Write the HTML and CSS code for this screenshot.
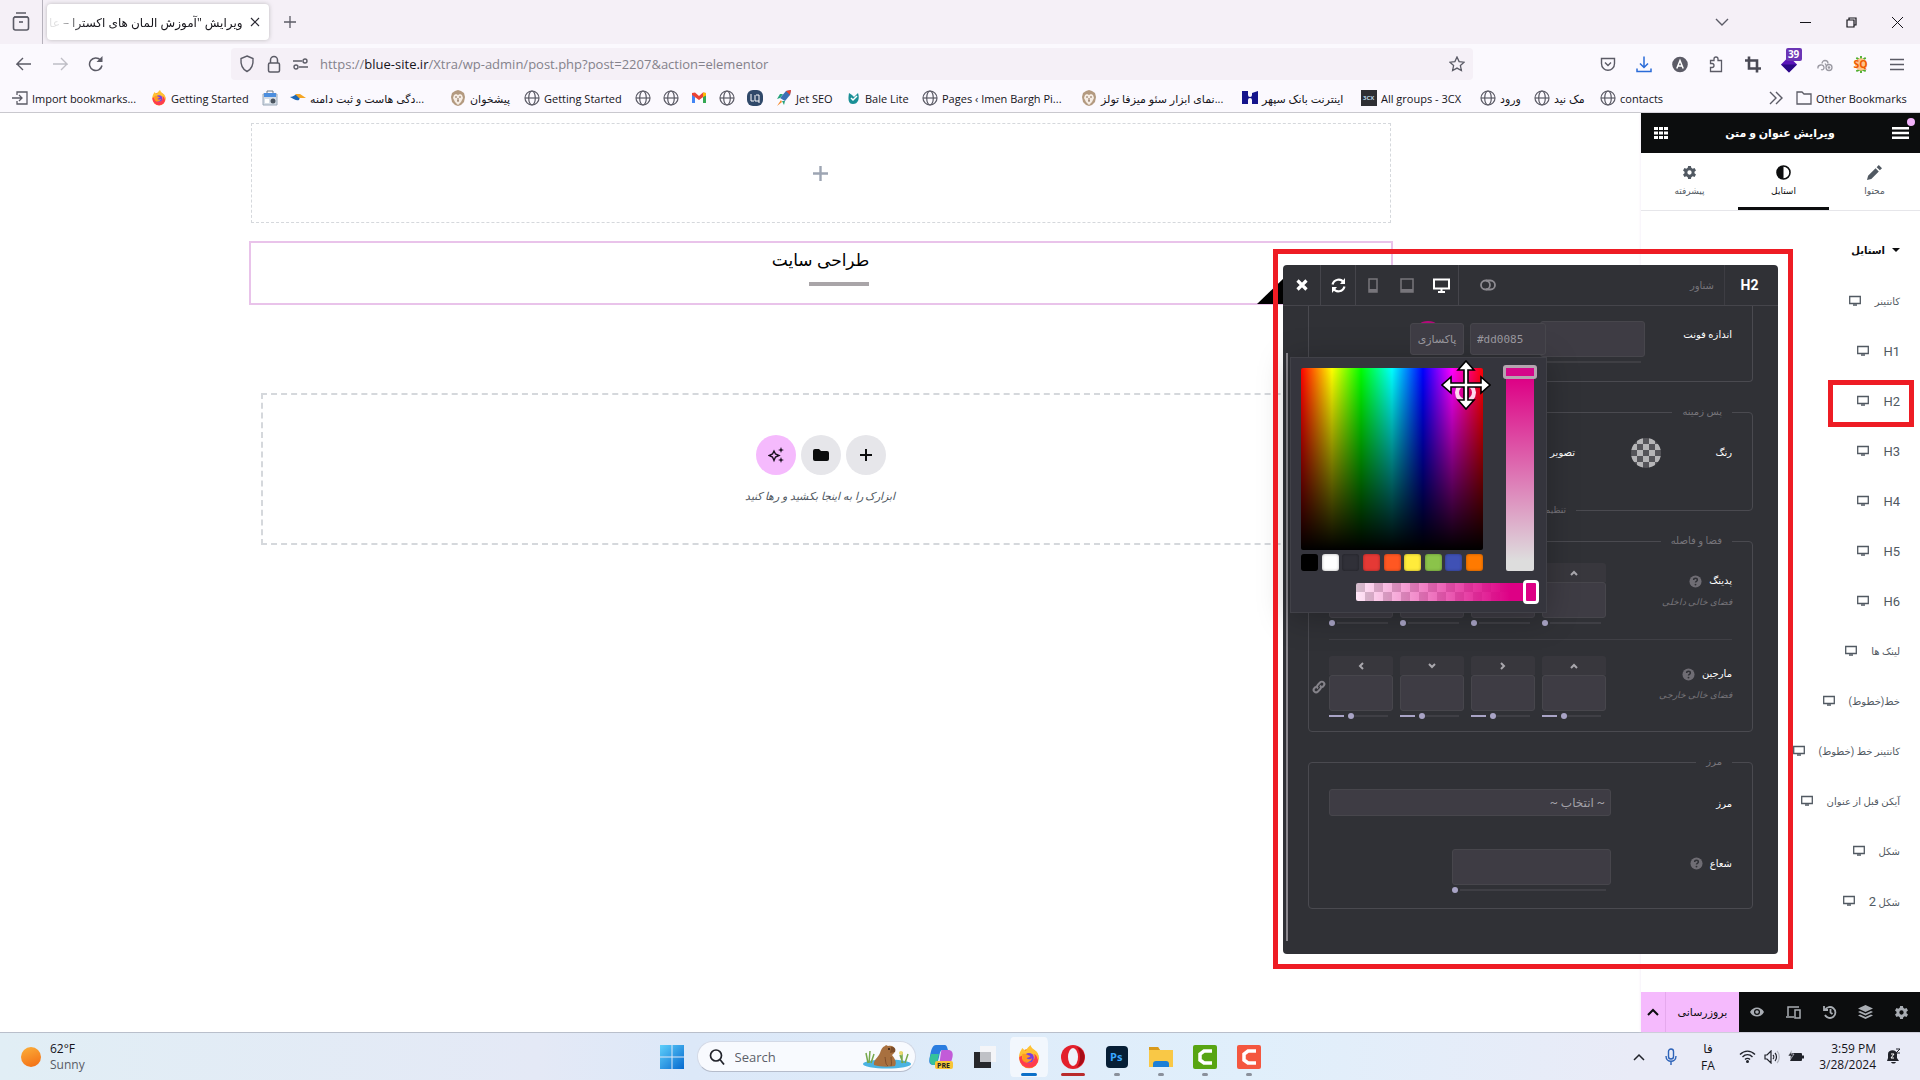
FILE: index.html
```html
<!DOCTYPE html>
<html lang="fa">
<head>
<meta charset="utf-8">
<title>ویرایش</title>
<link rel="stylesheet" href="styles.css">
</head>
<body>
<svg class="sprite" aria-hidden="true">
  <symbol id="globe" viewBox="0 0 16 16"><g fill="none" stroke="#5b5b66" stroke-width="1.2"><circle cx="8" cy="8" r="7"/><ellipse cx="8" cy="8" rx="3.3" ry="7"/><path d="M1 8h14"/></g></symbol>
  <symbol id="fox" viewBox="0 0 32 32"><circle cx="16" cy="18" r="13" fill="#ff8a1c"/><path d="M3 18C2 10 6 7 7 4c2 2 3 3 5 4 1-4 4-6 6-8 1 5 6 6 9 10 2 3 2 7 2 9z" fill="#ffc233"/><path d="M3 16c0 17 22 19 25 5-1-6-3-8-5-9 3 12-10 16-16 8 0-2-1-4 0-6z" fill="#ff3b4e"/><circle cx="16" cy="17" r="6.5" fill="#7a3ee0"/><path d="M7 12c3-1 5 0 7 1 1 1 3 1 4 2-2 2-4 1-5 3 2 2 6 1 7-1 0 7-12 8-13 0z" fill="#ff9a1f"/></symbol>
  <symbol id="lion" viewBox="0 0 16 16"><path d="M8 0l3 1 3 2 1 4-1 5-3 3-3 1-3-1-3-3-1-5 1-4 3-2z" fill="#b39a80"/><path d="M4 5l2-1 2 1 2-1 2 1 1 3-2 4-3 3-3-3-2-4z" fill="#f6ede4"/><path d="M5 7h2M9 7h2M7 11h2M8 8v3" stroke="#8a705a" fill="none"/></symbol>
  <symbol id="monitor" viewBox="0 0 12 12"><path d="M.7 1.500h10.600v7H.7z" fill="none" stroke="currentColor" stroke-width="1.300"/><path d="M4 10h4" stroke="currentColor" stroke-width="1.500"/></symbol>
  <symbol id="chev" viewBox="0 0 10 10"><path d="M2 7l3-3 3 3" fill="none" stroke="currentColor" stroke-width="2"/></symbol>
  <symbol id="help" viewBox="0 0 14 14"><circle cx="7" cy="7" r="6.500" fill="#6f6d74"/><path d="M5 5.500c0-2.500 4-2.500 4 0 0 1.300-2 1.200-2 2.500" fill="none" stroke="#303136" stroke-width="1.600"/><circle cx="7" cy="10.300" r="1" fill="#303136"/></symbol>
  <symbol id="gear" viewBox="0 0 16 16"><path fill="currentColor" fill-rule="evenodd" d="M6.500 1h3l.4 2 1.500.9 2-.7 1.500 2.600-1.600 1.400v1.600l1.600 1.400-1.500 2.600-2-.7-1.500.9-.4 2h-3l-.4-2-1.500-.9-2 .7-1.500-2.600 1.600-1.400V7.200L1.100 5.800l1.500-2.600 2 .7 1.500-.9zM8 5.700a2.300 2.300 0 1 0 0 4.600 2.300 2.300 0 0 0 0-4.600z"/></symbol>
</svg>

<header class="tabstrip">
  <button class="ico view" aria-label="View"><svg width="18" height="20" viewBox="0 0 18 20" fill="none" stroke="#5b5b66" stroke-width="1.600"><path d="M4 1h10M2 5h14"/><rect x="1.500" y="5" width="15" height="13" rx="2"/><path d="M7 10h4"/></svg></button>
  <div class="tab"><span class="tab-title" dir="rtl">ویرایش "آموزش المان های اکسترا – عا</span><button class="ico" aria-label="Close tab"><svg width="10" height="10" viewBox="0 0 10 10" stroke="#2b2a33" stroke-width="1.200"><path d="M1 1l8 8M9 1l-8 8"/></svg></button></div>
  <button class="ico newtab" aria-label="New tab"><svg width="12" height="12" viewBox="0 0 12 12" stroke="#5b5b66" stroke-width="1.300"><path d="M6 0v12M0 6h12"/></svg></button>
  <div class="winctl">
    <button class="ico" aria-label="List tabs"><svg width="14" height="14" viewBox="0 0 14 14" fill="none" stroke="#5b5b66" stroke-width="1.400"><path d="M1 4l6 6 6-6"/></svg></button>
    <button class="ico" aria-label="Minimize"><svg width="11" height="11" viewBox="0 0 11 11" stroke="#15141a"><path d="M0 5.500h11"/></svg></button>
    <button class="ico" aria-label="Restore"><svg width="11" height="11" viewBox="0 0 11 11" fill="none" stroke="#15141a" stroke-width="1.200"><path d="M1 3h7v7H1zM3 3V1h7v7H8"/></svg></button>
    <button class="ico" aria-label="Close"><svg width="11" height="11" viewBox="0 0 11 11" stroke="#15141a"><path d="M0 0l11 11M11 0L0 11"/></svg></button>
  </div>
</header>

<nav class="navbar">
  <div class="navbtns">
    <button class="ico" aria-label="Back"><svg width="16" height="14" viewBox="0 0 16 14" fill="none" stroke="#5b5b66" stroke-width="1.400"><path d="M15 7H1l6-6M1 7l6 6"/></svg></button>
    <button class="ico" aria-label="Forward"><svg width="16" height="14" viewBox="0 0 16 14" fill="none" stroke="#bfbec6" stroke-width="1.400"><path d="M1 7h14L9 1M15 7l-6 6"/></svg></button>
    <button class="ico" aria-label="Reload"><svg width="16" height="16" viewBox="0 0 16 16" fill="none" stroke="#5b5b66" stroke-width="1.500"><path d="M14 9.500A6.300 6.300 0 1 1 12.500 4"/><path d="M14.500 0v6h-6z" fill="#5b5b66" stroke="none"/></svg></button>
  </div>
  <div class="urlbar">
    <svg width="16" height="18" viewBox="0 0 16 18" fill="none" stroke="#5b5b66" stroke-width="1.400"><path d="M8 1l6 2.500c.5 6-1 10.500-6 13-5-2.500-6.500-7-6-13z"/></svg>
    <svg width="14" height="18" viewBox="0 0 14 18" fill="none" stroke="#5b5b66" stroke-width="1.500"><rect x="1.500" y="8" width="11" height="9" rx="1.500"/><path d="M3.500 8V5a3.500 3.500 0 0 1 7 0v3"/></svg>
    <svg width="15" height="12" viewBox="0 0 15 12" fill="none" stroke="#5b5b66" stroke-width="1.400"><path d="M0 3h9M6 9h9"/><circle cx="12" cy="3" r="2"/><circle cx="3" cy="9" r="2"/></svg>
    <div class="url" role="textbox" aria-label="Address">https://<b>blue-site.ir</b>/Xtra/wp-admin/post.php?post=2207&amp;action=elementor</div>
    <svg width="16" height="16" viewBox="0 0 16 16" fill="none" stroke="#5b5b66" stroke-width="1.300"><path d="M8 1l2.100 4.600 5 .6-3.700 3.400 1 5L8 12.100 3.600 14.600l1-5L.9 6.200l5-.6z"/></svg>
  </div>
  <div class="exts">
    <svg viewBox="0 0 16 16" fill="none" stroke="#5b5b66" stroke-width="1.400"><path d="M1.500 2h13v5c0 9-13 9-13 0z"/><path d="M5 6l3 3 3-3"/></svg>
    <svg viewBox="0 0 16 16" fill="none" stroke="#2a6bd8" stroke-width="1.500"><path d="M8 0v11M4 7l4 4 4-4M1 12v3h14v-3"/></svg>
    <svg viewBox="0 0 16 16"><circle cx="8" cy="8" r="7.800" fill="#5b5b66"/><path d="M4.800 12L8 4l3.200 8M6 9.500h4" fill="none" stroke="#fff" stroke-width="1.500"/></svg>
    <svg viewBox="0 0 16 16" fill="none" stroke="#5b5b66" stroke-width="1.300"><path d="M2.500 15v-4h1.500a2 2 0 0 0 0-4H2.500V4H6V2.500a2 2 0 0 1 4 0V4h3.500v11z"/></svg>
    <svg viewBox="0 0 16 16" fill="none" stroke="#4a4a55" stroke-width="2.600"><path d="M4 0v12h12M0 4h12v12"/></svg>
    <span class="ext39"><svg viewBox="0 0 16 16"><path d="M8 0l8 8-8 8-8-8z" fill="#5a16b8"/><path d="M0 8h16l-8 8z" fill="#2b0a86"/></svg><em>39</em></span>
    <svg viewBox="0 0 16 16" fill="none" stroke="#9a99a2" stroke-width="1.300"><path d="M5 7a3 3 0 1 1 6 0M1 12a3 3 0 0 1 6-1 2 2 0 0 1-3 2M8 7l2 3"/><circle cx="12" cy="11" r="3"/><circle cx="12" cy="11" r=".7"/></svg>
    <svg viewBox="0 0 16 18"><path d="M3 2l5 3 5-3M3 16l5-2 5 2M8 0v4M8 18v-3" stroke="#4faf2f" stroke-width="2" fill="none"/><circle cx="8" cy="9" r="6.500" fill="#ffc38a"/><text x="0" y="13" font-size="11" font-weight="700" fill="#f05a00">SQ</text></svg>
    <svg viewBox="0 0 16 16" stroke="#5b5b66" stroke-width="1.400"><path d="M1 3h14M1 8h14M1 13h14"/></svg>
  </div>
</nav>

<nav class="bookmarks">
  <a href="#"><svg viewBox="0 0 16 16" fill="none" stroke="#5b5b66" stroke-width="1.300"><path d="M5 5V2h10v12H5v-3M0 8h10M7 5l3 3-3 3"/></svg>Import bookmarks...</a>
  <a href="#"><svg><use href="#fox"/></svg>Getting Started</a>
  <a href="#" aria-label="Store"><svg viewBox="0 0 16 16"><path d="M1 4h14v11H1z" fill="#d5dde6" stroke="#9aa8b8"/><path d="M2 3h12v4H2z" fill="#4c8ede"/><path d="M5 3V1h6v2" stroke="#6c7a88" fill="none"/><path d="M3 9h4v4H3z" fill="#fff"/><circle cx="11" cy="11" r="2.500" fill="#4b5560"/></svg></a>
  <a href="#"><svg viewBox="0 0 16 16"><path d="M0 7c4 0 5-3 8-3 2 2 2 4 1 6-3 1-5-1-9-3z" fill="#1c67b5"/><path d="M5 4h5l6 4H9z" fill="#f5a623"/></svg><bdi dir="rtl">...دگی هاست و ثبت دامنه</bdi></a>
  <a href="#"><svg><use href="#lion"/></svg>پیشخوان</a>
  <a href="#"><svg><use href="#globe"/></svg>Getting Started</a>
  <a href="#" aria-label="Site"><svg><use href="#globe"/></svg></a>
  <a href="#" aria-label="Site"><svg><use href="#globe"/></svg></a>
  <a href="#" aria-label="Mail"><svg viewBox="0 0 16 16"><path d="M1 4v9h3V7" fill="#4285f4"/><path d="M12 13h3V4l-3 3z" fill="#34a853"/><path d="M1 3l3-.5 4 3.500 4-3.500L15 3v2L8 10 1 5z" fill="#ea4335"/><path d="M12 2.500L15 3v2.500L12 7z" fill="#fbbc04"/></svg></a>
  <a href="#" aria-label="Site"><svg><use href="#globe"/></svg></a>
  <a href="#" aria-label="Site"><svg viewBox="0 0 16 16"><rect width="16" height="16" rx="6" fill="#30496a"/><path d="M4 4v7h3M8 5v6h4V5H9M12 11v2" stroke="#fff" fill="none"/></svg></a>
  <a href="#"><svg viewBox="0 0 16 16"><path d="M4 8l6-7 5-1-1 5-5 6z" fill="#3c6fb4"/><path d="M10 1l5-1-1 5z" fill="#e8452f"/><path d="M4 8L1 9l3-5h3zM9 11l-1 4-2-4z" fill="#25a37b"/><path d="M5 10l-4 6 5-4z" fill="#f58a2c"/></svg>Jet SEO</a>
  <a href="#"><svg viewBox="0 0 16 16"><path d="M4 3l3 2 2 2 4-4c2 6 0 11-5 11S3 9 4 3z" fill="#1a8f96"/><path d="M6 8l2 2 4-4" stroke="#fff" fill="none" stroke-width="1.500"/></svg>Bale Lite</a>
  <a href="#"><svg><use href="#globe"/></svg>Pages ‹ Imen Bargh Pi...</a>
  <a href="#"><svg><use href="#lion"/></svg><bdi dir="rtl">...نمای ابزار سئو میزفا تولز</bdi></a>
  <a href="#"><svg viewBox="0 0 16 16"><path d="M0 1h6v4a2 2 0 0 0 4 0V3l6-2v13h-6v-4a2 2 0 0 0-4 0v4H0z" fill="#14148c"/></svg>اینترنت بانک سپهر</a>
  <a href="#"><svg viewBox="0 0 16 16"><path d="M0 0h16v16H0z" fill="#2e2f33"/><text x="2" y="10" font-size="6" font-weight="700" fill="#b9d6e6">3CX</text></svg>All groups - 3CX</a>
  <a href="#"><svg><use href="#globe"/></svg>ورود</a>
  <a href="#"><svg><use href="#globe"/></svg>مک نید</a>
  <a href="#"><svg><use href="#globe"/></svg>contacts</a>
  <a href="#" class="more" aria-label="More"><svg viewBox="0 0 16 16" fill="none" stroke="#5b5b66" stroke-width="1.400"><path d="M2 2l6 6-6 6M8 2l6 6-6 6"/></svg></a>
  <a href="#"><svg viewBox="0 0 16 16" fill="none" stroke="#5b5b66" stroke-width="1.300"><path d="M1 14V2h5l2 2h7v10z"/></svg>Other Bookmarks</a>
</nav>

<main class="work">
  <section class="canvas">
    <div class="empty"><svg width="15" height="15" viewBox="0 0 15 15" stroke="#9da5b3" stroke-width="2.400"><path d="M7.500 0v15M0 7.500h15"/></svg></div>
    <div class="selected"><div class="heading" dir="rtl"><h2>طراحی سایت</h2><i></i></div></div>
    <div class="dropzone" dir="rtl">
      <div class="dz-btns">
        <button aria-label="Add"><svg width="12" height="12" viewBox="0 0 12 12" stroke="#0c0d0e" stroke-width="2"><path d="M6 0v12M0 6h12"/></svg></button>
        <button aria-label="Library"><svg width="16" height="14" viewBox="0 0 16 14"><path d="M2 1h4l2 2h6a2 2 0 0 1 2 2v6a2 2 0 0 1-2 2H2a2 2 0 0 1-2-2V3a2 2 0 0 1 2-2z" fill="#0c0d0e"/></svg></button>
        <button class="ai" aria-label="AI"><svg width="16" height="16" viewBox="0 0 16 16"><path d="M6 4l1.500 3L11 8.500 7.500 10 6 13.500 4.500 10 1 8.500 4.500 7z" fill="none" stroke="#1b1020" stroke-width="1.400"/><path d="M13 0l.8 2.200L16 3l-2.200.8L13 6l-.8-2.200L10 3l2.200-.8zM13 10l.8 2.200 2.200.8-2.200.8L13 16l-.8-2.200L10 13l2.200-.8z" fill="#1b1020"/></svg></button>
      </div>
      <p>ابزارک را به اینجا بکشید و رها کنید</p>
    </div>
    <span class="corner"></span>
  </section>

  <aside class="panel" dir="rtl">
    <div class="p-head">
      <button class="ico" aria-label="Menu"><svg width="17" height="12" viewBox="0 0 17 12" stroke="#fff" stroke-width="2.400"><path d="M0 1.200h17M0 6h17M0 10.800h17"/></svg></button>
      <h1>ویرایش عنوان و متن</h1>
      <button class="ico" aria-label="Widgets"><svg width="14" height="12" viewBox="0 0 14 12" fill="#fff"><path d="M0 0h4v3H0zM5 0h4v3H5zM10 0h4v3h-4zM0 4.500h4v3H0zM5 4.500h4v3H5zM10 4.500h4v3h-4zM0 9h4v3H0zM5 9h4v3H5zM10 9h4v3h-4z"/></svg></button>
      <span class="dot"></span>
    </div>
    <div class="p-tabs">
      <button><svg width="14" height="14" viewBox="0 0 14 14" fill="#515962"><path d="M0 14l1-4 7-7 3 3-7 7zM9 2l2-2 3 3-2 2z"/></svg>محتوا</button>
      <button class="on"><svg width="15" height="15" viewBox="0 0 15 15"><circle cx="7.500" cy="7.500" r="6.500" fill="#fff" stroke="#0c0d0e" stroke-width="1.600"/><path d="M7.500 1a6.500 6.500 0 0 0 0 13z" fill="#0c0d0e"/></svg>استایل</button>
      <button><svg width="15" height="15"><use href="#gear"/></svg>پیشرفته</button>
    </div>
    <h3 class="p-title"><i></i>استایل</h3>
    <ul class="p-rows">
      <li><span>کانتینر</span><svg><use href="#monitor"/></svg></li>
      <li class="tag"><span>H1</span><svg><use href="#monitor"/></svg></li>
      <li class="tag marked"><span>H2</span><svg><use href="#monitor"/></svg></li>
      <li class="tag"><span>H3</span><svg><use href="#monitor"/></svg></li>
      <li class="tag"><span>H4</span><svg><use href="#monitor"/></svg></li>
      <li class="tag"><span>H5</span><svg><use href="#monitor"/></svg></li>
      <li class="tag"><span>H6</span><svg><use href="#monitor"/></svg></li>
      <li><span>لینک ها</span><svg><use href="#monitor"/></svg></li>
      <li><span>خط(خطوط)</span><svg><use href="#monitor"/></svg></li>
      <li><span>کانتینر خط (خطوط)</span><svg><use href="#monitor"/></svg></li>
      <li><span>آیکن قبل از عنوان</span><svg><use href="#monitor"/></svg></li>
      <li><span>شکل</span><svg><use href="#monitor"/></svg></li>
      <li><span>شکل <b>2</b></span><svg><use href="#monitor"/></svg></li>
    </ul>
    <footer class="p-foot">
      <button aria-label="Settings"><svg width="15" height="15"><use href="#gear"/></svg></button>
      <button aria-label="Structure"><svg width="15" height="14" viewBox="0 0 15 14" fill="#a9adb3"><path d="M7.500 0L15 3.500 7.500 7 0 3.500z"/><path d="M0 7l2-1 5.500 2.500L13 6l2 1-7.500 3.500z"/><path d="M0 10.500l2-1L7.500 12 13 9.500l2 1L7.500 14z"/></svg></button>
      <button aria-label="History"><svg width="14" height="14" viewBox="0 0 14 14" fill="none" stroke="#a9adb3" stroke-width="1.800"><path d="M2 5a5.500 5.500 0 1 1 0 5M1 1v4h4M7.500 4v3.500l2 1.500"/></svg></button>
      <button aria-label="Responsive"><svg width="15" height="13" viewBox="0 0 15 13" fill="none" stroke="#a9adb3" stroke-width="1.500"><path d="M2 10V1h11M0 11h8M9 4h5v8H9z"/></svg></button>
      <button aria-label="Preview"><svg width="14" height="10" viewBox="0 0 14 10"><path d="M0 5c3-6 11-6 14 0-3 6-11 6-14 0z" fill="#a9adb3"/><circle cx="7" cy="5" r="3" fill="#0c0d0e"/><circle cx="7" cy="5" r="1.800" fill="#a9adb3"/></svg></button>
      <button class="publish">بروزرسانی</button>
      <button class="pub-more" aria-label="Options"><svg width="12" height="8" viewBox="0 0 12 8" fill="none" stroke="#0c0d0e" stroke-width="2"><path d="M1 7l5-5 5 5"/></svg></button>
    </footer>
  </aside>

  <section class="popup" dir="rtl">
    <header class="pop-head">
      <strong>H2</strong>
      <span class="hover">شناور</span>
      <button class="toggle" aria-label="Toggle"><svg width="16" height="12" viewBox="0 0 16 12" fill="none" stroke="#8d8b91" stroke-width="1.800"><circle cx="5.500" cy="6" r="4.500"/><path d="M6 1.500h4.500a4.500 4.500 0 0 1 0 9H6"/></svg></button>
      <div class="devices">
        <button aria-label="Desktop"><svg width="17" height="15" viewBox="0 0 17 15" fill="none" stroke="#fff" stroke-width="2"><path d="M1 1.500h15v9H1zM5 14h7M8.500 10v4"/></svg></button>
        <button aria-label="Tablet"><svg width="14" height="15" viewBox="0 0 14 15"><path d="M1 1h12v13H1z" fill="none" stroke="#77757b" stroke-width="1.500"/><path d="M1 11h12v3H1z" fill="#77757b"/></svg></button>
        <button aria-label="Phone"><svg width="10" height="15" viewBox="0 0 10 15"><path d="M1 1h8v13H1z" fill="none" stroke="#77757b" stroke-width="1.500"/><path d="M1 11h8v3H1z" fill="#77757b"/></svg></button>
      </div>
      <button class="act" aria-label="Reset"><svg width="15" height="15" viewBox="0 0 15 15" fill="none" stroke="#fff" stroke-width="2.200"><path d="M1.500 6.500C3 1 10 0 12.500 4.500M13.500 8.500C12 14 5 15 2.500 10.500"/><path d="M14 0v6H9zM1 15V9h5z" fill="#fff" stroke="none"/></svg></button>
      <button class="act" aria-label="Close"><svg width="12" height="12" viewBox="0 0 12 12" stroke="#fff" stroke-width="3.200"><path d="M1.500 1.500l9 9M10.500 1.500l-9 9"/></svg></button>
    </header>
    <div class="pop-body">
      <fieldset class="cut">
        <label for="fs">اندازه فونت</label>
        <span class="fs-box"><input id="fs" class="box" type="text"><i></i></span>
        <span class="pink"></span>
      </fieldset>
      <fieldset class="bg">
        <legend>پس زمینه</legend>
        <span class="lab">رنگ</span><button class="checker" aria-label="Color"></button><span class="lab img">تصویر</span>
        <span class="more-set">تنظیمات</span>
      </fieldset>
      <fieldset class="space">
        <legend>فضا و فاصله</legend>
        <div class="srow">
          <div class="slab"><span>پدینگ <svg width="13" height="13"><use href="#help"/></svg></span><em>فضای خالی داخلی</em></div>
          <div class="quad zero">
            <div><b><svg><use href="#chev"/></svg></b><input class="box" type="text" aria-label="Top"><input type="range" value="0" aria-label="Top"></div>
            <div><b><svg class="r"><use href="#chev"/></svg></b><input class="box" type="text" aria-label="Right"><input type="range" value="0" aria-label="Right"></div>
            <div><b><svg class="d"><use href="#chev"/></svg></b><input class="box" type="text" aria-label="Bottom"><input type="range" value="0" aria-label="Bottom"></div>
            <div><b><svg class="l"><use href="#chev"/></svg></b><input class="box" type="text" aria-label="Left"><input type="range" value="0" aria-label="Left"></div>
          </div>
        </div>
        <div class="srow">
          <div class="slab"><span>مارجین <svg width="13" height="13"><use href="#help"/></svg></span><em>فضای خالی خارجی</em></div>
          <div class="quad">
            <div><b><svg><use href="#chev"/></svg></b><input class="box" type="text" aria-label="Top"><input type="range" value="36" aria-label="Top"></div>
            <div><b><svg class="r"><use href="#chev"/></svg></b><input class="box" type="text" aria-label="Right"><input type="range" value="36" aria-label="Right"></div>
            <div><b><svg class="d"><use href="#chev"/></svg></b><input class="box" type="text" aria-label="Bottom"><input type="range" value="36" aria-label="Bottom"></div>
            <div><b><svg class="l"><use href="#chev"/></svg></b><input class="box" type="text" aria-label="Left"><input type="range" value="36" aria-label="Left"></div>
          </div>
          <svg class="link" width="14" height="14" viewBox="0 0 14 14" fill="none" stroke="#85838a" stroke-width="2"><path d="M6 8.500C4 6.500 5 5.500 8 2.500c2.500-2.500 6 1 3.500 3.500L10 7.500M8 5.500c2 2 1 3-2 6C3.500 14 0 10.500 2.500 8L4 6.500"/></svg>
        </div>
      </fieldset>
      <fieldset class="border">
        <legend>مرز</legend>
        <div class="brow"><label for="bsel">مرز</label><select id="bsel" class="box"><option>~ انتخاب ~</option></select></div>
        <div class="brow rad"><label for="rad">شعاع <svg width="13" height="13"><use href="#help"/></svg></label><span class="rbox zero"><input id="rad" class="box" type="text"><input type="range" value="0" aria-label="Radius"></span></div>
      </fieldset>
      <span class="scroll"></span>
    </div>

    <div class="picker-wrap" dir="ltr">
      <div class="hexrow"><button class="box clear">پاکسازی</button><input class="box hex" type="text" value="#dd0085" aria-label="Color value"></div>
      <div class="picker">
        <div class="pk-top">
          <div class="pk-left">
            <div class="sv"><span class="ring"></span><svg class="cursor" width="50" height="50" viewBox="0 0 50 50"><path d="M25 1l8 9h-6v13h13v-6l9 8-9 8v-6H27v13h6l-8 9-8-9h6V27H10v6l-9-8 9-8v6h13V10h-6z" fill="#fff" stroke="#000" stroke-width="1.600"/></svg></div>
            <div class="sw"><i class="c1"></i><i class="c2"></i><i class="c3"></i><i class="c4"></i><i class="c5"></i><i class="c6"></i><i class="c7"></i><i class="c8"></i><i class="c9"></i></div>
          </div>
          <div class="vbar"><i></i></div>
        </div>
        <div class="abar"><i></i></div>
      </div>
    </div>
  </section>
  <span class="frame"></span>
</main>

<footer class="taskbar">
  <div class="weather"><i></i><div><span>62°F</span><small>Sunny</small></div></div>
  <div class="apps">
    <svg width="24" height="24" viewBox="0 0 24 24"><defs><linearGradient id="w" x2="1" y2="1"><stop stop-color="#5fd0fb"/><stop offset="1" stop-color="#0669cf"/></linearGradient></defs><path d="M0 0h11.500v11.500H0zM12.500 0H24v11.500H12.500zM0 12.500h11.500V24H0zM12.500 12.500H24V24H12.500z" fill="url(#w)"/></svg>
    <label class="search"><svg width="16" height="16" viewBox="0 0 16 16" fill="none" stroke="#20222a" stroke-width="1.700"><circle cx="7" cy="6.500" r="5.500"/><path d="M11 10.500l4 5"/></svg><input type="text" placeholder="Search" aria-label="Search">
      <svg width="48" height="24" viewBox="0 0 48 24"><ellipse cx="24" cy="19" rx="24" ry="4.500" fill="#4bb3e2"/><path d="M11 20c-1-5 4-7 6-12 1-3 2-6 5-7l1-1 2 1c4-1 7 1 7 4s-2 4-3 5c3 4 5 7 3 11-6 1-15 1-21-1z" fill="#a8703f"/><path d="M28 2c4 0 5 2 4 5l-5 1z" fill="#7c4d2a"/><path d="M22 12c1 4 0 7 3 9M28 12c0 4 1 6 0 9" stroke="#7c4d2a" fill="none"/><circle cx="26" cy="4" r="1" fill="#2c1a10"/><path d="M5 18L3 8M6 18l1-12M8 18l3-9M39 18V7M42 18l3-9M40 18l-3-8" stroke="#76a84b" stroke-width="1.500" fill="none"/><circle cx="38" cy="8" r="2" fill="#e8d76b"/></svg></label>
    <div class="app"><svg width="24" height="26" viewBox="0 0 24 26"><path d="M7 1h8c3 0 3 2 4 5h-5c-3 0-3 3-4 7s-2 8-5 8c-6 0-5-5-4-9C2 7 3 1 7 1z" fill="#2a7de0"/><path d="M13 6h6c6 0 5 6 4 9s-2 8-7 8H8c4-2 3-17 5-17z" fill="#c25bd8"/><path d="M2 10h8l-2 9-3 2c-5 0-5-6-3-11z" fill="#35c39a"/><rect x="6" y="17" width="18" height="8" rx="2" fill="#f8c537"/><text x="8" y="24" font-size="7" font-weight="700" fill="#222">PRE</text></svg></div>
    <div class="app"><svg width="24" height="24" viewBox="0 0 24 24"><path d="M1 7h17v16H1z" fill="#26272b"/><path d="M7 1h16v16H7z" fill="#f4f5f8"/><path d="M7 7h11v10H7z" fill="#bfc1c6"/></svg></div>
    <div class="app tile blue"><svg width="24" height="24"><use href="#fox"/></svg></div>
    <div class="app red"><svg width="24" height="24" viewBox="0 0 24 24"><ellipse cx="12" cy="12" rx="12" ry="12" fill="#e3202c"/><ellipse cx="12" cy="12" rx="5" ry="9" fill="#eef3fb"/><path d="M16 2c10 3 10 17 0 20 4-5 4-15 0-20z" fill="#a60c17"/></svg></div>
    <div class="app run"><svg width="22" height="22" viewBox="0 0 22 22"><rect width="22" height="22" rx="4" fill="#061e35"/><text x="4" y="15" font-size="11" font-weight="700" fill="#39a7ff">Ps</text></svg></div>
    <div class="app run"><svg width="24" height="22" viewBox="0 0 24 22"><path d="M0 1h9l2 3h13v17H0z" fill="#f9c846"/><path d="M0 1h9l2 3H0z" fill="#d99a1c"/><path d="M4 21v-3c0-2 1-3 3-3h10c2 0 3 1 3 3v3z" fill="#1c7fd6"/></svg></div>
    <div class="app run"><svg width="24" height="24" viewBox="0 0 24 24"><rect width="24" height="24" rx="2" fill="#58a512"/><path d="M19 6h-8L7 9v6l4 3h8" fill="none" stroke="#fff" stroke-width="3.500"/></svg></div>
    <div class="app run"><svg width="24" height="24" viewBox="0 0 24 24"><rect width="24" height="24" rx="2" fill="#f4573f"/><path d="M19 6h-8L7 9v6l4 3h8" fill="none" stroke="#fff" stroke-width="3.500"/></svg></div>
  </div>
  <div class="tray">
    <svg width="12" height="8" viewBox="0 0 12 8" fill="none" stroke="#20222a" stroke-width="1.500"><path d="M1 7l5-5 5 5"/></svg>
    <svg width="12" height="18" viewBox="0 0 12 18" fill="none" stroke="#2c62b8" stroke-width="1.400"><rect x="3.500" y="1" width="5" height="10" rx="2.500"/><path d="M1 8c0 7 10 7 10 0M6 13v4"/></svg>
    <div class="lang"><span>فا</span><span>FA</span></div>
    <svg width="17" height="13" viewBox="0 0 17 13" fill="none" stroke="#20222a" stroke-width="1.400"><path d="M1 4.500c4.500-4.500 10.500-4.500 15 0M3.500 7c3-3 7-3 10 0M6 9.500c1.500-1.500 3.500-1.500 5 0"/><circle cx="8.500" cy="11.500" r=".8"/></svg>
    <svg width="16" height="14" viewBox="0 0 16 14" fill="none" stroke="#20222a" stroke-width="1.200"><path d="M1 5v4h2l4 4V1L3 5zM9 5c1 1 1 3 0 4M11 3c2 2 2 6 0 8"/><path d="M13 1c3 3 3 9 0 12" stroke="#b5b8c2"/></svg>
    <svg width="16" height="13" viewBox="0 0 16 13"><path d="M3 3h10a1 1 0 0 1 1 1v1.500h2v3h-2V10a1 1 0 0 1-1 1H3a1 1 0 0 1-1-1z" fill="#20222a"/><path d="M4 0L0 6h3l-1 4 4-6H3z" fill="#20222a" stroke="#e9ebf7" stroke-width=".6"/></svg>
    <div class="clock"><span>3:59 PM</span><span>3/28/2024</span></div>
    <svg width="15" height="17" viewBox="0 0 15 17"><path d="M1 13l1-3V6c0-5 9-5 9 0v4l2 3zM5 14h5c-1 2-4 2-5 0z" fill="#20222a"/><path d="M10 1h4l-4 4h4" fill="none" stroke="#20222a"/><path d="M5 6h3L5 10h3" fill="none" stroke="#fff"/></svg>
  </div>
</footer>
</body>
</html>
```
FILE: styles.css
```css
*, *::before, *::after { box-sizing: border-box; }
body {
  margin: 0;
  height: 100vh;
  display: flex;
  flex-direction: column;
  overflow: hidden;
  background: #fff;
  font-family: "Open Sans", "DejaVu Sans", sans-serif;
  font-size: 12px;
  color: #15141a;
}
button, input, select { font: inherit; color: inherit; }
button { border: 0; background: none; padding: 0; display: flex; align-items: center; justify-content: center; }
svg { display: block; flex: none; }
.sprite { position: absolute; width: 0; height: 0; }
h1, h2, h3, p, ul { margin: 0; padding: 0; }

/* browser chrome */
.tabstrip { height: 44px; flex: none; display: flex; align-items: center; background: #f5f0f7; }
.view { width: 43px; height: 44px; border-right: 1px solid #b6b2bc; }
.tab { width: 222px; height: 36px; margin-left: 4px; padding: 0 12px 0 2px; display: flex; align-items: center; gap: 7px; background: #fff; border-radius: 4px; box-shadow: 0 0 4px #8888; }
.tab-title { flex: 1; white-space: nowrap; font-size: 12px; mask-image: linear-gradient(90deg, #0002 8px, #000 36px); }
.newtab { margin-left: 15px; }
.winctl { margin-left: auto; display: grid; grid-template-columns: 120px 46px 46px 46px; }
.navbar { height: 40px; flex: none; display: flex; align-items: center; background: #fbf9fe; }
.navbtns { display: flex; gap: 20px; padding-left: 16px; width: 231px; }
.urlbar { flex: 1; height: 32px; padding: 0 8px; display: flex; align-items: center; gap: 12px; background: #f5f0f7; border-radius: 4px; }
.url { flex: 1; font-size: 13px; color: #84828b; }
.url b { font-weight: 400; color: #15141a; }
.exts { width: 447px; padding: 0 15px 0 127px; display: flex; justify-content: space-between; }
.exts svg { width: 16px; height: 17px; }
.ext39 { position: relative; }
.ext39 em { position: absolute; left: 5px; top: -13px; width: 16px; height: 13px; line-height: 13px; background: #6b35b5; color: #fff; font-style: normal; font-weight: 700; font-size: 10px; text-align: center; border-radius: 2px; }
.ext39 em { top: -8px; }
.bookmarks {
  height: 29px; flex: none; padding: 0 12px; display: grid; align-items: center;
  grid-template-columns: 139px 111px 28px 160px 74px 111px 28px 28px 28px 28px 29px 69px 77px 159px 161px 119px 119px 54px 66px 80px 1fr 112px;
  background: #fbf9fe; border-bottom: 1px solid #c9c8ce;
}
.bookmarks a { display: flex; align-items: center; gap: 4px; color: #15141a; text-decoration: none; white-space: nowrap; font-size: 11px; }
.bookmarks svg { width: 16px; height: 16px; }
.bookmarks .more { justify-self: end; padding-right: 12px; }

/* editor area */
.work { position: relative; flex: 1; min-height: 0; display: flex; }
.canvas { position: relative; flex: 1; display: flex; flex-direction: column; align-items: center; padding-top: 10px; }
.empty { width: 1140px; max-width: 100%; height: 100px; display: flex; align-items: center; justify-content: center; border: 1px dashed #d5d8dc; }
.selected { width: 1144px; max-width: 100%; height: 64px; margin-top: 18px; border: 2px solid #e9c3ea; display: flex; justify-content: center; }
.heading h2 { font-size: 17px; line-height: 22px; font-weight: 400; color: #000; padding: 6px 0 11px; }
.heading i { display: block; width: 60px; height: 4px; background: #a9a5a8; }
.dropzone { width: 1120px; max-width: 100%; height: 152px; margin-top: 88px; padding-top: 40px; border: 2px dashed #d5d8dc; text-align: center; }
.dz-btns { display: flex; justify-content: center; gap: 5px; }
.dz-btns button { width: 40px; height: 40px; border-radius: 50%; background: #e6e6ea; }
.dz-btns .ai { background: #f5bafd; }
.dropzone p { margin-top: 13px; font-size: 11px; line-height: 16px; font-style: italic; color: #515962; }
.corner { position: absolute; right: 357px; top: 165px; width: 27px; height: 26px; background: #000; clip-path: polygon(100% 0, 100% 100%, 0 100%); }

/* side panel */
.panel { width: 279px; display: flex; flex-direction: column; background: #fff; color: #515962; font-family: Roboto, "DejaVu Sans", sans-serif; box-shadow: 0 0 3px #f0e8f4; }
.p-head { position: relative; height: 40px; flex: none; padding: 0 11px 0 13px; display: flex; align-items: center; justify-content: space-between; background: #0c0d0e; color: #fff; }
.p-head h1 { font-size: 11px; }
.dot { position: absolute; right: 5px; top: 5px; width: 8px; height: 8px; border-radius: 50%; background: #f3b2fa; }
.p-tabs { height: 58px; flex: none; display: grid; grid-template-columns: 91px 91px 1fr; border-bottom: 1px solid #e6e6ea; }
.p-tabs button { flex-direction: column; gap: 6px; font-size: 9px; color: #515962; border-bottom: 3px solid #0000; }
.p-tabs svg { width: 15px; height: 15px; }
.p-tabs .on { border-color: #0c0d0e; color: #0c0d0e; }
.p-title { display: flex; align-items: center; gap: 7px; height: 40px; margin-top: 19px; padding: 0 20px; font-size: 10px; color: #0c0d0e; }
.p-title i { border: 4px solid #0000; border-top-color: #0c0d0e; border-bottom: 0; }
.p-rows { flex: 1; padding-top: 6px; list-style: none; }
.p-rows li { position: relative; height: 50px; padding: 0 20px; display: flex; align-items: center; gap: 14px; font-size: 10px; }
.p-rows .tag, .p-rows b { font-size: 13px; font-weight: 400; }
.p-rows svg { width: 12px; height: 12px; }
.marked::after { content: ""; position: absolute; right: 6px; top: 4px; width: 86px; height: 47px; border: 5px solid #ee1c24; }
.p-foot { height: 40px; flex: none; display: flex; background: #0c0d0e; color: #a9adb3; }
.p-foot button { flex: 1; }
.p-foot .publish { flex: 0 0 73px; background: #f5bafd; color: #0c0d0e; font-size: 11px; }
.p-foot .pub-more { flex: 0 0 25px; background: #f5bafd; border-right: 1px solid #e5a9ed; }

/* floating style window */
.popup { position: absolute; right: 142px; top: 152px; width: 495px; height: 689px; border-radius: 4px; background: #303136; color: #fff; font-family: Roboto, "DejaVu Sans", sans-serif; font-size: 10px; }
.pop-head { height: 41px; display: flex; align-items: center; border-bottom: 1px solid #45454b; }
.pop-head > * { height: 40px; display: flex; align-items: center; justify-content: center; }
.pop-head strong { width: 54px; font-size: 14px; padding-right: 4px; border-left: 1px solid #3d3d43; }
.hover { flex: 1; color: #77757b; padding-right: 10px; }
.pop-head .hover { justify-content: flex-start; }
.toggle { width: 58px; }
.devices { width: 104px; border: solid #45454b; border-width: 0 1px; }
.devices button { width: 34px; }
.act { width: 34px; }
.act:last-child { width: 38px; border-right: 1px solid #45454b; }
.pop-body { position: relative; padding: 0 25px; }
fieldset { position: relative; min-width: 0; margin: 0 0 20px; padding: 0 20px; border: 1px solid #4a4a50; border-radius: 4px; }
legend { height: 20px; line-height: 20px; padding: 0 10px; color: #77757b; }
.box { display: block; background: #3e3c44; border: 1px solid #47464c; border-radius: 3px; padding: 0 6px; outline: 0; }
.cut { height: 76px; display: flex; justify-content: space-between; padding-top: 15px; border-top: 0; border-radius: 0 0 4px 4px; }
.cut label { padding-top: 8px; }
.fs-box { margin-left: 211px; margin-right: auto; }
.cut { justify-content: flex-start; }
.cut label { width: 87px; flex: none; }
.fs-box { margin: 0; }
.fs-box .box { width: 105px; height: 36px; }
.fs-box i { display: block; height: 2px; margin: 4px 4px 0; background: #3f3f44; }
.pink { position: absolute; left: 104px; top: 15px; width: 30px; height: 30px; border-radius: 50%; background: #b5097a; }
.bg { height: 109px; }
.bg .lab { display: inline-block; width: 71px; line-height: 30px; vertical-align: top; margin-top: 16px; }
.checker { display: inline-block; width: 30px; height: 30px; margin-top: 16px; border-radius: 50%; background: conic-gradient(#b5b5b7 25%, #55555a 0 50%, #b5b5b7 0 75%, #55555a 0) 0 0 / 12px 12px; }
.bg .img { margin-right: 56px; }
.more-set { position: absolute; right: 176px; bottom: -8px; padding: 0 10px; line-height: 16px; font-size: 9px; color: #77757b; background: #303136; }
.space { height: 201px; }
.srow { position: relative; height: 92px; display: flex; justify-content: space-between; padding-top: 12px; }
.srow + .srow { height: 88px; padding-top: 13px; }
.srow:not(:last-child)::after { content: ""; position: absolute; left: 0; right: 0; bottom: 3px; height: 1px; background: #3f3f45; }
.slab { padding-top: 10px; line-height: 16px; }
.slab span { display: flex; align-items: center; gap: 7px; }
.slab em { display: block; margin-top: 5px; font-size: 9px; color: #77757b; }
.quad { width: 277px; display: grid; grid-template-columns: repeat(4, 64px); gap: 7px; }
.quad b { display: flex; height: 19px; align-items: center; justify-content: center; color: #aaa8ae; background: #38373d; border-radius: 3px 3px 0 0; }
.quad svg { width: 10px; height: 10px; }
.quad .r { transform: rotate(90deg); }
.quad .d { transform: rotate(180deg); }
.quad .l { transform: rotate(-90deg); }
.quad .box { width: 64px; height: 36px; }
input[type=range] { appearance: none; direction: ltr; display: block; width: calc(100% - 5px); height: 10px; margin: 0 5px 0 0; background: linear-gradient(90deg, #a9a4c6 15px, #0000 0 25px, #3f3f45 0) 0 50% / 100% 2px no-repeat; }
.zero input[type=range] { background: linear-gradient(90deg, #0000 8px, #3f3f45 0) 0 50% / 100% 2px no-repeat; }
input[type=range]::-webkit-slider-thumb { appearance: none; width: 6px; height: 6px; border-radius: 50%; background: #a9a4c6; }
.link { position: absolute; left: -17px; top: 37px; }
.border { height: 157px; margin: 0; }
.brow { display: flex; margin-top: 17px; }
.brow label { display: flex; align-items: center; gap: 7px; width: 121px; height: 28px; }
.brow select { width: 282px; height: 27px; padding: 0 5px; appearance: none; color: #a3a1a8; font-size: 12px; }
.brow + .brow { margin-top: 32px; }
.rbox, .rbox .box { width: 159px; }
.rbox .box { height: 36px; }
.scroll { position: absolute; left: 3px; top: 47px; width: 2px; height: 588px; background: #89878d; }

/* colour picker */
.picker-wrap { position: absolute; left: 7px; top: 58px; width: 257px; }
.hexrow { display: flex; justify-content: flex-end; gap: 6px; padding: 0 1px 2px 0; }
.hexrow .box { height: 32px; color: #99979e; }
.clear { display: flex; width: 54px; font-size: 11px; }
.hex { width: 76px; font-family: "DejaVu Sans Mono", monospace; font-size: 11px; }
.picker { height: 256px; padding: 10px; background: #35353d; border: 1px solid #414148; box-shadow: 0 4px 30px #0004; }
.pk-top { display: flex; gap: 23px; }
.sv { position: relative; width: 182px; height: 182px; border-radius: 2px; background: linear-gradient(#0000, #000), linear-gradient(90deg, red, #ff0 17%, #0f0 33%, #0ff 50%, #00f 67%, #f0f 83%, red); }
.ring { position: absolute; left: 154px; top: 14px; width: 21px; height: 21px; border: 4px solid #ffd6ef; border-radius: 50%; }
.cursor { position: absolute; left: 140px; top: -8px; }
.sw { display: flex; justify-content: space-between; margin-top: 4px; }
.sw i { width: 17px; height: 17px; border-radius: 3px; box-shadow: inset 0 0 3px #0005; }
.c1 { background: #000; }
.c2 { background: #fff; }
.c3 { background: #303038; }
.c4 { background: #e53935; }
.c5 { background: #ff5722; }
.c6 { background: #ffeb3b; }
.c7 { background: #8bc34a; }
.c8 { background: #3f51b5; }
.c9 { background: #ff7a00; }
.vbar { position: relative; width: 28px; height: 203px; border-radius: 2px; background: linear-gradient(#dd0085 5%, #ddd 95%); }
.vbar i { position: absolute; left: -3px; top: -3px; width: 34px; height: 14px; border: 3px solid #b5a5b0; border-radius: 3px; background: #d5088a; }
.abar { position: relative; width: 182px; height: 18px; margin: 12px 0 0 55px; border-radius: 2px; background: linear-gradient(90deg, #ffd0f080, #dd0085 85%), conic-gradient(#fff 25%, #aaa 0 50%, #fff 0 75%, #aaa 0) 0 0 / 18px 18px; }
.abar i { position: absolute; right: -1px; top: -3px; width: 16px; height: 24px; border: 3px solid #fff; border-radius: 4px; background: #dd0085; }
.frame { position: absolute; right: 127px; top: 136px; width: 520px; height: 720px; border: 5px solid #ee1c24; pointer-events: none; }

/* taskbar */
.taskbar { height: 48px; flex: none; display: grid; grid-template-columns: 1fr auto 1fr; align-items: center; border-top: 1px solid #b9bfcb; background: linear-gradient(90deg, #e1eef5, #e4e9f6 28%, #dce8f8 36%, #e0effb 65%, #e9ebf7 85%); }
.weather { display: flex; align-items: center; gap: 9px; padding-left: 21px; line-height: 16px; }
.weather i { width: 20px; height: 20px; border-radius: 50%; background: linear-gradient(160deg, #fbb03b, #f36b12); }
.weather span, .weather small { display: block; font-size: 12px; }
.weather small { color: #585b66; }
.apps { display: flex; align-items: center; padding-left: 10px; }
.search { width: 219px; height: 31px; margin: 0 3px 0 13px; padding: 0 4px 0 11px; display: flex; align-items: center; gap: 10px; background: #f8fafe; border: 1px solid #d3d9e6; border-bottom-color: #b5bccb; border-radius: 16px; }
.search input { flex: 1; min-width: 0; border: 0; padding: 0; background: none; font-size: 13px; outline: 0; }
.search input::placeholder { color: #5c5f69; }
.app { position: relative; width: 44px; height: 40px; display: flex; align-items: center; justify-content: center; }
.app::after { position: absolute; bottom: 1px; height: 3px; border-radius: 2px; }
.run::after { content: ""; width: 6px; background: #8a909b; }
.blue::after { content: ""; width: 16px; background: #0b6fc8; }
.red::after { content: ""; width: 24px; background: #b92b2b; }
.tile { background: #f2f7fd content-box; padding: 0 3px; border-radius: 6px; }
.tray { justify-self: end; display: flex; align-items: center; gap: 8px; padding-right: 19px; }
.tray > svg:first-child { margin-right: 12px; }
.lang { width: 46px; text-align: center; line-height: 17px; }
.lang span, .clock span { display: block; }
.clock { width: 66px; padding-right: 2px; text-align: right; line-height: 16px; white-space: nowrap; }
```
